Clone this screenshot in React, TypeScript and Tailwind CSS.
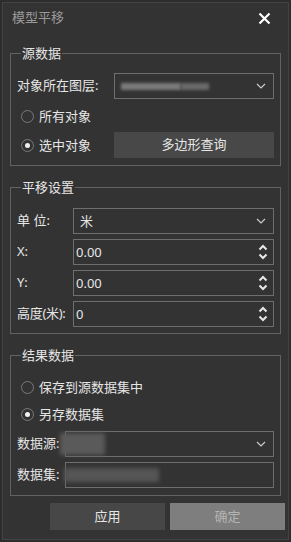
import React from 'react';

const font = { fontFamily: '"Noto Sans", "Noto Sans CJK SC", sans-serif' };

// small chevron used by the combo boxes
const Chevron: React.FC = () => (
  <svg width="10" height="6" viewBox="0 0 10 6" className="shrink-0">
    <path d="M1 1 L5 5 L9 1" fill="none" stroke="#cfcfcf" strokeWidth="1.1" />
  </svg>
);

// up/down arrows of the number boxes
const Spinner: React.FC = () => (
  <svg width="10" height="18" viewBox="0 0 10 18" className="shrink-0">
    <path d="M1.5 6.5 L5 3 L8.5 6.5" fill="none" stroke="#e8e8e8" strokeWidth="2" />
    <path d="M1.5 11.5 L5 15 L8.5 11.5" fill="none" stroke="#e8e8e8" strokeWidth="2" />
  </svg>
);

const Radio: React.FC<{ checked?: boolean; label: string }> = ({ checked, label }) => (
  <div className="flex items-center h-[26px] pl-[4px]">
    <span className="w-[13px] h-[13px] rounded-full border border-[#7a7a7a] flex items-center justify-center">
      {checked && <span className="w-[5px] h-[5px] rounded-full bg-[#f0f0f0]"></span>}
    </span>
    <span className="ml-[5px] text-[13px] text-[#e6e6e6] leading-none">{label}</span>
  </div>
);

const Combo: React.FC<{ children?: React.ReactNode; className?: string }> = ({ children, className }) => (
  <div
    className={`flex-1 h-[26px] border border-[#6e6e6e] flex items-center justify-between pl-[6px] pr-[7px] ${className ?? ''}`}
  >
    <div className="flex items-center min-w-0">{children}</div>
    <Chevron />
  </div>
);

const NumberBox: React.FC<{ value: string }> = ({ value }) => (
  <div className="flex-1 h-[26px] border border-[#6e6e6e] flex items-center justify-between pl-[2px] pr-[5px]">
    <span className="text-[13px] text-[#e6e6e6] leading-none">{value}</span>
    <Spinner />
  </div>
);

const Group: React.FC<{ title: string; children: React.ReactNode; className?: string }> = ({
  title,
  children,
  className,
}) => (
  <fieldset className={`border border-[#626262] px-[6px] ${className ?? ''}`}>
    <legend className="ml-[4px] px-[1px] text-[13px] leading-[20px] text-[#e6e6e6]">{title}</legend>
    {children}
  </fieldset>
);

export default function App() {
  return (
    <div className="w-[291px] h-[542px] bg-[#2d2d2d] p-[2px]" style={font}>
      <div className="h-full border border-[#434343] bg-[#333333] flex flex-col">
        {/* Title bar */}
        <div className="h-[30px] flex items-center justify-between pl-[9px] pr-[17px]">
          <span className="text-[13px] text-[#9a9a9a]">模型平移</span>
          <svg width="13" height="13" viewBox="0 0 13 13">
            <path d="M1.5 1.5 L11.5 11.5 M11.5 1.5 L1.5 11.5" stroke="#ffffff" strokeWidth="2.2" />
          </svg>
        </div>

        <div className="px-[7px] mt-[10px]">
          {/* 源数据 */}
          <Group title="源数据" className="pb-[7px]">
            <div className="flex items-center mt-[10px]">
              <span className="w-[97px] text-[13px] text-[#e6e6e6]">对象所在图层:</span>
              <Combo>
                <div className="w-[60px] h-[7px] bg-[#7a7a7a] blur-[1.5px]"></div>
                <div className="w-[28px] h-[7px] bg-[#6a6a6a] blur-[1.5px]"></div>
              </Combo>
            </div>
            <div className="mt-[4px]">
              <Radio label="所有对象" />
            </div>
            <div className="flex items-center mt-[3px]">
              <div className="w-[97px]">
                <Radio checked label="选中对象" />
              </div>
              <div className="flex-1 h-[26px] bg-[#484848] flex items-center justify-center text-[13px] text-[#e6e6e6]">
                多边形查询
              </div>
            </div>
          </Group>

          {/* 平移设置 */}
          <Group title="平移设置" className="pb-[6px] mt-[11px]">
            <div className="flex flex-col gap-[5px] mt-[11px]">
              <div className="flex items-center">
                <span className="w-[56px] text-[13px] text-[#e6e6e6]">单 位:</span>
                <Combo>
                  <span className="text-[13px] text-[#e6e6e6] leading-none">米</span>
                </Combo>
              </div>
              <div className="flex items-center">
                <span className="w-[56px] text-[13px] text-[#e6e6e6]">X:</span>
                <NumberBox value="0.00" />
              </div>
              <div className="flex items-center">
                <span className="w-[56px] text-[13px] text-[#e6e6e6]">Y:</span>
                <NumberBox value="0.00" />
              </div>
              <div className="flex items-center">
                <span className="w-[56px] text-[13px] text-[#e6e6e6] tracking-[-0.3px]">高度(米):</span>
                <NumberBox value="0" />
              </div>
            </div>
          </Group>

          {/* 结果数据 */}
          <Group title="结果数据" className="pb-[7px] mt-[11px]">
            <div className="mt-[9px]">
              <Radio label="保存到源数据集中" />
            </div>
            <div className="mt-[1px]">
              <Radio checked label="另存数据集" />
            </div>
            <div className="flex items-center mt-[4px]">
              <span className="w-[48px] text-[13px] text-[#e6e6e6]">数据源:</span>
              <Combo className="!pl-0">
                <div className="w-[45px] h-[22px] bg-[#5a5a5a] blur-[2px] -ml-[6px]"></div>
              </Combo>
            </div>
            <div className="flex items-center mt-[5px]">
              <span className="w-[48px] text-[13px] text-[#e6e6e6]">数据集:</span>
              <div className="flex-1 h-[26px] border border-[#6e6e6e] flex items-center">
                <div className="w-[95px] h-[14px] bg-[#555555] blur-[2px] -ml-[2px]"></div>
              </div>
            </div>
          </Group>
        </div>

        {/* Buttons */}
        <div className="flex justify-end gap-[5px] pr-[3px] mt-[7px]">
          <div className="w-[115px] h-[27px] bg-[#474747] flex items-center justify-center text-[13px] text-[#e6e6e6]">
            应用
          </div>
          <div className="w-[115px] h-[27px] bg-[#7e7e7e] flex items-center justify-center text-[13px] text-[#b4b4b4]">
            确定
          </div>
        </div>
      </div>
    </div>
  );
}
